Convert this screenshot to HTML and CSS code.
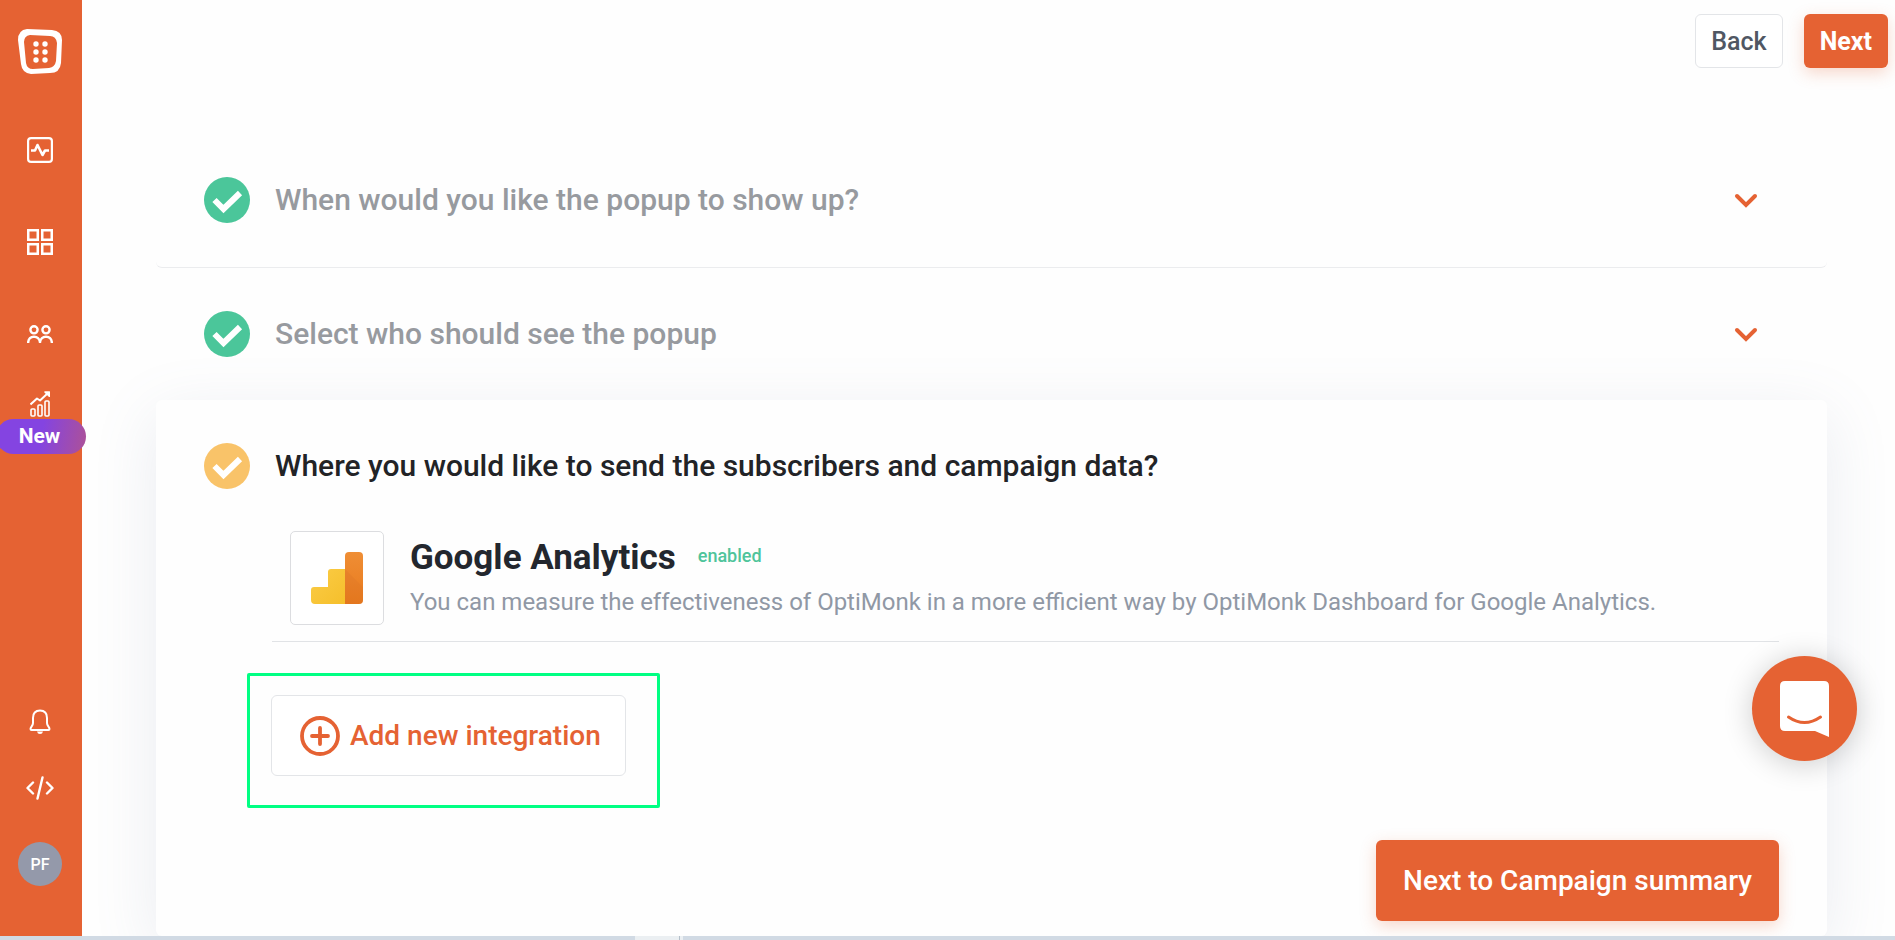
FILE: index.html
```html
<!DOCTYPE html>
<html lang="en">
<head>
    <meta charset="UTF-8">
    <meta name="viewport" content="width=device-width, initial-scale=1.0">
    <title>Campaign settings</title>
    <link rel="stylesheet" href="styles.css">
</head>
<body>

<div class="app">
    <aside class="sidebar">
        <a href="#" class="logo" aria-label="Home">
            <svg width="44" height="46" viewBox="0 0 44 46">
                <path fill="#fff" fill-rule="evenodd" d="M9 0 L34 1 Q44 2 44 11 L43 34 Q42 44 32 44 L13 45 Q4 44 3 35 L0 11 Q0 1 9 0Z M12 6 Q6 7 6 13 L8 34 Q9 40 15 40 L31 39 Q37 38 38 32 L39 14 Q38 7 32 7Z"/>
                <g fill="#fff">
                    <circle cx="18" cy="15" r="2.700"/><circle cx="27" cy="15" r="2.700"/>
                    <circle cx="18" cy="23" r="2.700"/><circle cx="27" cy="23" r="2.700"/>
                    <circle cx="18" cy="31" r="2.700"/><circle cx="27" cy="31" r="2.700"/>
                </g>
            </svg>
        </a>
        <nav class="menu">
            <a href="#" class="menu-item" aria-label="Dashboard">
                <svg width="26" height="26" viewBox="0 0 26 26" fill="none" stroke="#fff" stroke-width="2.200" stroke-linejoin="round">
                    <rect x="1.100" y="1.100" width="23.800" height="23.800" rx="3"/>
                    <path stroke-width="2.600" d="M4 13.500H8L10.500 8L15.500 18L18 13.500H22"/>
                </svg>
            </a>
            <a href="#" class="menu-item" aria-label="Campaigns">
                <svg width="26" height="26" viewBox="0 0 26 26" fill="none" stroke="#fff" stroke-width="2.500">
                    <rect x="1.250" y="1.250" width="9.500" height="9.500"/><rect x="15.250" y="1.250" width="9.500" height="9.500"/>
                    <rect x="1.250" y="15.250" width="9.500" height="9.500"/><rect x="15.250" y="15.250" width="9.500" height="9.500"/>
                </svg>
            </a>
            <a href="#" class="menu-item" aria-label="Subscribers">
                <svg width="26" height="18" viewBox="0 0 26 18" fill="none" stroke="#fff" stroke-width="2.400">
                    <circle cx="7" cy="4.800" r="3.600"/><circle cx="19" cy="4.800" r="3.600"/>
                    <path d="M1.200 18V17Q1.800 12 7 11.600Q12 12 13 17V18V17Q14 12 19 11.600Q24.200 12 24.800 17V18"/>
                </svg>
            </a>
            <a href="#" class="menu-item menu-item-small" aria-label="Analytics">
                <svg width="20" height="26" viewBox="0 0 20 26" fill="none" stroke="#fff" stroke-width="1.600" stroke-linejoin="round">
                    <rect x="1" y="18" width="4" height="7" rx="1"/><rect x="8" y="14" width="4" height="11" rx="1"/><rect x="15" y="10" width="4" height="15" rx="1"/>
                    <path stroke-width="2" d="M.500 13.500L7 7.500L10 9.500L18 2"/><path fill="#fff" d="M15 1H19.300V5.300Z"/>
                </svg>
                <span class="badge">New</span>
            </a>
        </nav>
        <div class="sidebar-bottom">
            <button type="button" class="icon-button" aria-label="Notifications">
                <svg width="22" height="26" viewBox="0 0 22 26" fill="none" stroke="#fff" stroke-width="2" stroke-linejoin="round">
                    <path d="M11 1.500C6 1.500 4 5 4 9V14C4 17 1.500 17.500 1.500 20Q1.500 21 2.500 21H19.500Q20.500 21 20.500 20C20.500 17.500 18 17 18 14V9C18 5 16 1.500 11 1.500Z"/>
                    <path fill="#fff" stroke="none" d="M8 22.500H14Q13.500 25 11 25Q8.500 25 8 22.500Z"/>
                </svg>
            </button>
            <button type="button" class="icon-button" aria-label="Insert code">
                <svg width="28" height="24" viewBox="0 0 28 24" fill="none" stroke="#fff" stroke-width="2.400" stroke-linecap="round" stroke-linejoin="round">
                    <path d="M7 6.500L1.500 12L7 17.500M21 6.500L26.500 12L21 17.500M16.500 1.500L11.500 22.500"/>
                </svg>
            </button>
            <button type="button" class="avatar">PF</button>
        </div>
    </aside>

    <main class="main">
        <header class="topbar">
            <button type="button" class="btn btn-light btn-small">Back</button>
            <button type="button" class="btn btn-primary btn-small btn-bold">Next</button>
        </header>

        <div class="steps">
            <section class="step step-line">
                <div class="step-header">
                    <svg class="check check-green" viewBox="0 0 46 46"><circle cx="23" cy="23" r="23"/><path d="M10.500 23L19.500 32L36 16"/></svg>
                    <h2>When would you like the popup to show up?</h2>
                    <button type="button" class="toggle" aria-label="Open">
                        <svg width="24" height="16" viewBox="0 0 24 16"><path d="M3 4L12 13L21 4"/></svg>
                    </button>
                </div>
            </section>
            <section class="step">
                <div class="step-header">
                    <svg class="check check-green" viewBox="0 0 46 46"><circle cx="23" cy="23" r="23"/><path d="M10.500 23L19.500 32L36 16"/></svg>
                    <h2>Select who should see the popup</h2>
                    <button type="button" class="toggle" aria-label="Open">
                        <svg width="24" height="16" viewBox="0 0 24 16"><path d="M3 4L12 13L21 4"/></svg>
                    </button>
                </div>
            </section>
            <section class="step step-active">
                <div class="step-header">
                    <svg class="check check-yellow" viewBox="0 0 46 46"><circle cx="23" cy="23" r="23"/><path d="M10.500 23L19.500 32L36 16"/></svg>
                    <h2>Where you would like to send the subscribers and campaign data?</h2>
                </div>
                <div class="step-body">
                    <div class="integration">
                        <div class="integration-logo">
                            <svg width="52" height="52" viewBox="0 0 52 52">
                                <defs>
                                    <linearGradient id="yellow" x1="0" y1="0" x2="1" y2="1"><stop offset="0" stop-color="#fbcc46"/><stop offset="1" stop-color="#f5bf2b"/></linearGradient>
                                    <linearGradient id="orange" x1="0" y1="0" x2="0" y2="1"><stop offset="0" stop-color="#ef8e35"/><stop offset="1" stop-color="#e8791c"/></linearGradient>
                                </defs>
                                <path fill="url(#yellow)" d="M35 17H20Q17 17 17 20V35H3Q0 35 0 38V48Q0 52 4 52H35Z"/>
                                <path fill="url(#orange)" d="M38 0H48Q52 0 52 4V48Q52 52 48 52H34V4Q34 0 38 0Z"/>
                                <path fill="#d0702a" opacity=".2" d="M34 17L52 35V48Q52 52 48 52H34Z"/>
                            </svg>
                        </div>
                        <div class="integration-text">
                            <div class="integration-title">
                                <h3>Google Analytics</h3>
                                <span class="status">enabled</span>
                            </div>
                            <p>You can measure the effectiveness of OptiMonk in a more efficient way by OptiMonk Dashboard for Google Analytics.</p>
                        </div>
                    </div>
                    <div class="highlight">
                        <button type="button" class="btn btn-light btn-large btn-add">
                            <svg width="40" height="40" viewBox="0 0 40 40" fill="none" stroke="#e56233" stroke-width="3.800" stroke-linecap="round">
                                <circle cx="20" cy="20" r="18"/><path d="M20 12V28M12 20H28"/>
                            </svg>
                            Add new integration
                        </button>
                    </div>
                    <div class="step-footer">
                        <button type="button" class="btn btn-primary btn-large">Next to Campaign summary</button>
                    </div>
                </div>
            </section>
        </div>
    </main>
</div>

<div class="bottom-strip"><span></span></div>

<button type="button" class="chat" aria-label="Open chat">
    <svg width="49" height="56" viewBox="0 0 49 56">
        <path fill="#fff" d="M5 0H44Q49 0 49 5V56L35 50H5Q0 50 0 45V5Q0 0 5 0Z"/>
        <path fill="none" stroke="#e56233" stroke-width="3" stroke-linecap="round" d="M8.500 36Q24.500 47 40.500 36"/>
    </svg>
</button>

</body>
</html>
```
FILE: styles.css
```css
* {
    box-sizing: border-box;
}
body {
    margin: 0;
    height: 100vh;
    display: flex;
    flex-direction: column;
    overflow: hidden;
    font-family: Roboto, Arial, sans-serif;
    background-color: #fefefe;
    color: #23272e;
}
h2, h3, p {
    margin: 0;
}
button {
    font-family: inherit;
    border: none;
    background: none;
    padding: 0;
    cursor: pointer;
}
svg {
    display: block;
    flex-shrink: 0;
}
.app {
    flex: 1;
    min-height: 0;
    display: flex;
}

/* Sidebar */
.sidebar {
    width: 82px;
    flex-shrink: 0;
    padding: 29px 16px 50px 0;
    display: flex;
    flex-direction: column;
    align-items: center;
    background-color: #e56233;
    position: relative;
    z-index: 1;
}
.sidebar > * {
    margin-left: 14px;
}
.menu {
    margin-top: 29px;
}
.menu-item {
    height: 92px;
    display: flex;
    align-items: center;
    justify-content: center;
    position: relative;
}
.menu-item-small {
    height: 48px;
}
.badge {
    position: absolute;
    top: 39px;
    left: 50%;
    width: 90px;
    margin-left: -44px;
    padding-right: 3px;
    border-radius: 18px;
    background: linear-gradient(100deg, #8444e1 50%, #ad5197);
    color: #fff;
    font-size: 21px;
    font-weight: 700;
    line-height: 35px;
    text-align: center;
}
.sidebar-bottom {
    margin-top: auto;
    display: flex;
    flex-direction: column;
    align-items: center;
}
.icon-button {
    height: 66px;
}
.avatar {
    width: 44px;
    height: 44px;
    margin-top: 21px;
    border-radius: 50%;
    background-color: #9499aa;
    color: #fff;
    font-size: 16px;
    font-weight: 500;
}

/* Buttons */
.btn {
    border-radius: 6px;
    font-weight: 500;
}
.btn-light {
    border: 1px solid #e3e5e8;
    background-color: #fff;
    color: #505763;
}
.btn-primary {
    background-color: #e56233;
    color: #fff;
    box-shadow: 0 5px 16px rgba(229, 98, 51, 0.25);
}
.btn-small {
    height: 54px;
    padding: 0 15px;
    font-size: 25px;
}
.btn-large {
    height: 81px;
    padding: 0 27px;
    font-size: 28px;
}
.btn-bold {
    padding: 0 16px;
    font-weight: 700;
}
.btn-add {
    display: flex;
    align-items: center;
    gap: 10px;
    padding: 0 24px 0 28px;
    color: #e56233;
}

/* Content */
.main {
    flex: 1;
    display: flex;
    flex-direction: column;
}
.topbar {
    display: flex;
    justify-content: flex-end;
    gap: 21px;
    padding: 14px 7px 0;
}
.steps {
    flex: 1;
    display: flex;
    flex-direction: column;
    margin: 66px 68px 0 74px;
}
.step {
    padding: 0 48px;
    border-radius: 6px;
}
.step-line {
    padding-bottom: 1px;
    border-bottom: 1px solid #ebecee;
}
.step-header {
    height: 132px;
    display: flex;
    align-items: center;
    gap: 25px;
}
.step-header h2 {
    flex: 1;
    font-size: 30px;
    font-weight: 500;
    line-height: 40px;
    color: #979a9f;
}
.check {
    width: 46px;
    height: 46px;
}
.check path {
    fill: none;
    stroke: #fff;
    stroke-width: 6;
}
.check-green {
    fill: #4bc69a;
}
.check-yellow {
    fill: #f9c369;
}
.toggle {
    padding: 0 21px;
}
.toggle path {
    fill: none;
    stroke: #e56233;
    stroke-width: 4;
    stroke-linecap: round;
}
.step-active {
    flex: 1;
    background-color: #fefefe;
    box-shadow: 0 16px 64px rgba(110, 130, 165, 0.14);
}
.step-active .step-header {
    height: 131px;
}
.step-active .step-header h2 {
    color: #222326;
}
.step-body {
    padding-left: 68px;
}
.integration {
    display: flex;
    align-items: center;
    gap: 26px;
    padding: 0 0 16px 18px;
    border-bottom: 1px solid #e1e3e6;
}
.integration-logo {
    width: 94px;
    height: 94px;
    flex-shrink: 0;
    display: flex;
    align-items: center;
    justify-content: center;
    border: 1px solid #dcdde0;
    border-radius: 5px;
    background-color: #fff;
}
.integration-title {
    display: flex;
    align-items: flex-start;
    gap: 22px;
}
.integration-title h3 {
    font-size: 35px;
    font-weight: 700;
    line-height: 48px;
}
.status {
    color: #4fc49b;
    font-size: 18px;
    font-weight: 500;
    line-height: 44px;
}
.integration-text p {
    font-size: 24px;
    line-height: 40px;
    color: #9098a5;
}
.highlight {
    width: 413px;
    margin: 31px 0 0 -25px;
    padding: 19px 21px 29px;
    border: 3px solid #00ff83;
    border-radius: 2px;
}
.step-footer {
    display: flex;
    justify-content: flex-end;
    margin-top: 32px;
}

.bottom-strip {
    height: 4px;
    padding-left: 635px;
    background-color: #d1dae4;
    position: relative;
    z-index: 2;
}
.bottom-strip span {
    display: block;
    width: 45px;
    height: 4px;
    background-color: #ebeff2;
    border-right: 1px solid #b4bfca;
    box-shadow: 3px 0 #ebeff2;
}

/* Chat launcher */
.chat {
    position: fixed;
    right: 38px;
    bottom: 179px;
    width: 105px;
    height: 105px;
    display: flex;
    align-items: center;
    justify-content: center;
    border-radius: 50%;
    background-color: #e56233;
    box-shadow: 0 3px 30px rgba(0, 0, 0, 0.2);
}
```
